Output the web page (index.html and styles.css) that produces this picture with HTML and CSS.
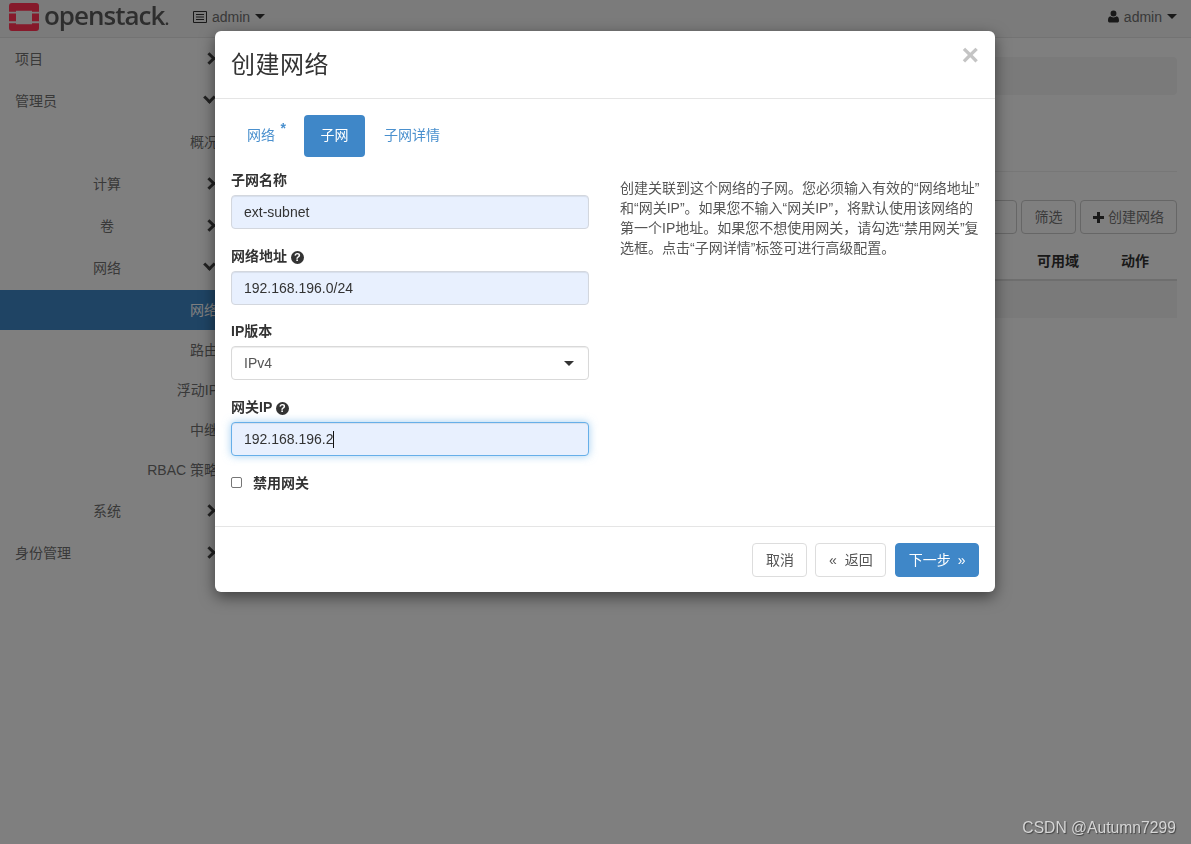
FILE: index.html
```html
<!DOCTYPE html>
<html lang="en">
<head>
    <meta charset="UTF-8">
    <meta name="viewport" content="width=device-width, initial-scale=1.0">
    <title>创建网络</title>
    <link rel="stylesheet" href="styles.css">
</head>
<body>
    <nav class="navbar">
        <div class="brand">
            <svg class="logo-mark" viewBox="0 0 30 29" width="30" height="28" preserveAspectRatio="none">
                <path fill="#861a2b" d="M3 0h24a3 3 0 0 1 3 3v6h-7V8H7v1H0V3a3 3 0 0 1 3-3zM0 11h7v8H0zM23 11h7v8h-7zM0 21h7v1h16v-1h7v5a3 3 0 0 1-3 3H3a3 3 0 0 1-3-3z"/>
            </svg>
            <span class="logo-text">openstack<span class="logo-dot">.</span></span>
        </div>
        <div class="project-menu">
            <svg class="nav-icon" viewBox="0 0 14 12" width="14" height="12">
                <path fill="#333" fill-rule="evenodd" d="M1 0h12a1 1 0 0 1 1 1v10a1 1 0 0 1-1 1H1a1 1 0 0 1-1-1V1a1 1 0 0 1 1-1zm0 1v10h12V1zm2 2h8v1H3zm0 2.500h8v1H3zM3 8h8v1H3z"/>
            </svg>
            <span>admin</span>
            <span class="caret"></span>
        </div>
        <div class="user-menu">
            <svg class="nav-icon" viewBox="0 0 12 13" width="11" height="13">
                <path fill="#333" d="M6 0a3.200 3.200 0 0 1 3.200 3.300A3.200 3.200 0 0 1 6 6.600a3.200 3.200 0 0 1-3.200-3.300A3.200 3.200 0 0 1 6 0zM2.600 6.300C3.500 7.100 4.700 7.600 6 7.600s2.500-.5 3.400-1.300c1.700.3 2.600 1.900 2.600 4.700 0 1.200-.8 2-1.900 2H1.900C.8 13 0 12.200 0 11c0-2.800.9-4.400 2.600-4.700z"/>
            </svg>
            <span>admin</span>
            <span class="caret"></span>
        </div>
    </nav>

    <div class="layout">
        <aside class="sidebar">
            <div class="side-row level-1"><span>项目</span><i class="chev chev-right"></i></div>
            <div class="side-row level-1"><span>管理员</span><i class="chev chev-down"></i></div>
            <div class="side-row sub level-3"><span>概况</span></div>
            <div class="side-row level-2 gap-top"><span>计算</span><i class="chev chev-right"></i></div>
            <div class="side-row level-2"><span>卷</span><i class="chev chev-right"></i></div>
            <div class="side-row level-2"><span>网络</span><i class="chev chev-down"></i></div>
            <div class="side-row sub level-3 active gap-top"><span>网络</span></div>
            <div class="side-row sub level-3"><span>路由</span></div>
            <div class="side-row sub level-3"><span>浮动IP</span></div>
            <div class="side-row sub level-3"><span>中继</span></div>
            <div class="side-row sub level-3"><span>RBAC 策略</span></div>
            <div class="side-row level-2"><span>系统</span><i class="chev chev-right"></i></div>
            <div class="side-row level-1"><span>身份管理</span><i class="chev chev-right"></i></div>
        </aside>

        <main class="content">
            <div class="crumb-bar"></div>
            <div class="title-rule"></div>
            <div class="actions">
                <div class="btn search-slot"></div>
                <button class="btn">筛选</button>
                <button class="btn create">
                    <svg viewBox="0 0 11 11" width="11" height="11"><path fill="#333" d="M4 0h3v4h4v3H7v4H4V7H0V4h4z"/></svg>
                    创建网络
                </button>
            </div>
            <div class="table-head">
                <span class="col-zone">可用域</span>
                <span class="col-action">动作</span>
            </div>
            <div class="table-row"></div>
        </main>
    </div>

    <div class="backdrop"></div>

    <div class="modal">
        <div class="modal-header">
            <h4 class="modal-title">创建网络</h4>
            <span class="close">×</span>
        </div>
        <div class="modal-body">
            <div class="tabs">
                <a class="tab">网络<sup class="req">*</sup></a>
                <a class="tab active">子网</a>
                <a class="tab">子网详情</a>
            </div>
            <div class="panes">
                <form class="fields">
                    <div class="field">
                        <label>子网名称</label>
                        <div class="input filled">ext-subnet</div>
                    </div>
                    <div class="field">
                        <label>网络地址 <span class="help">?</span></label>
                        <div class="input filled">192.168.196.0/24</div>
                    </div>
                    <div class="field">
                        <label>IP版本</label>
                        <div class="input select">IPv4<span class="caret"></span></div>
                    </div>
                    <div class="field">
                        <label>网关IP <span class="help">?</span></label>
                        <div class="input filled focus">192.168.196.2<span class="cursor"></span></div>
                    </div>
                    <div class="check-row">
                        <span class="checkbox"></span>
                        <label>禁用网关</label>
                    </div>
                </form>
                <p class="help-text">创建关联到这个网络的子网。您必须输入有效的“网络地址”<br>和“网关IP”。如果您不输入“网关IP”，将默认使用该网络的<br>第一个IP地址。如果您不想使用网关，请勾选“禁用网关”复<br>选框。点击“子网详情”标签可进行高级配置。</p>
            </div>
        </div>
        <div class="modal-footer">
            <button class="btn">取消</button>
            <button class="btn"><span class="angle">«</span>返回</button>
            <button class="btn primary">下一步<span class="angle after">»</span></button>
        </div>
    </div>

    <div class="watermark">CSDN @Autumn7299</div>
</body>
</html>
```

FILE: styles.css
```css
* {
    box-sizing: border-box;
}

html, body {
    height: 100%;
}

body {
    margin: 0;
    font-family: "Liberation Sans", "Noto Sans CJK SC", sans-serif;
    font-size: 14px;
    line-height: 20px;
    color: #333;
    background: #fff;
    overflow: hidden;
}

/* top bar */
.navbar {
    display: flex;
    align-items: center;
    height: 38px;
    padding-right: 14px;
    background: #f6f6f6;
    border-bottom: 1px solid #e7e7e7;
    color: #727272;
}

.brand {
    display: flex;
    align-items: center;
    width: 193px;
    padding-left: 9px;
    position: relative;
    z-index: 3;
}

.logo-mark {
    flex: none;
    margin-top: -3px;
}

.logo-text {
    margin: -5px 0 0 5px;
    font-family: "Open Sans", sans-serif;
    font-size: 26px;
    font-weight: 600;
    letter-spacing: -1px;
    line-height: 30px;
    color: #2e2e2e;
}

.logo-dot {
    font-size: 18px;
}

.project-menu, .user-menu {
    display: flex;
    align-items: center;
    margin-top: -4px;
}

.user-menu {
    margin-left: auto;
}

.nav-icon {
    margin-right: 5px;
}

.caret {
    display: inline-block;
    width: 0;
    height: 0;
    margin-left: 5px;
    border-top: 5px solid #333;
    border-left: 5px solid transparent;
    border-right: 5px solid transparent;
}

/* page under the dialog */
.layout {
    display: flex;
}

.sidebar {
    flex: none;
    width: 218px;
    color: #727272;
}

.side-row {
    position: relative;
    height: 42px;
    line-height: 42px;
    white-space: nowrap;
}

.side-row.sub {
    height: 40px;
    line-height: 40px;
}

.side-row.gap-top {
    margin-top: 1px;
}

.level-1 {
    padding-left: 15px;
}

.level-2 {
    padding-right: 4px;
    text-align: center;
}

.level-3 {
    text-align: right;
}

.side-row.active {
    background: #3e88c8;
    color: #fff;
}

.chev {
    position: absolute;
    right: 4px;
    top: 16px;
    width: 9px;
    height: 9px;
    border-top: 3px solid #444;
    border-right: 3px solid #444;
}

.chev-right {
    transform: rotate(45deg);
}

.chev-down {
    top: 13px;
    right: 4px;
    transform: rotate(135deg);
}

.content {
    flex: 1;
    padding: 19px 14px 0 15px;
}

.crumb-bar {
    height: 38px;
    background: #f5f5f5;
    border-radius: 4px;
}

.title-rule {
    height: 1px;
    margin-top: 76px;
    background: #eee;
}

.actions {
    display: flex;
    justify-content: flex-end;
    gap: 4px;
    margin-top: 28px;
}

.table-head {
    display: flex;
    justify-content: flex-end;
    height: 47px;
    padding-top: 17px;
    border-bottom: 2px solid #ddd;
    font-weight: bold;
}

.col-zone {
    margin-right: 42px;
}

.col-action {
    margin-right: 28px;
}

.table-row {
    height: 37px;
    background: #f5f5f5;
}

.btn {
    height: 34px;
    padding: 6px 12.5px;
    border: 1px solid #ccc;
    border-radius: 4px;
    background: #fff;
    color: #777;
    font: inherit;
}

.search-slot {
    width: 200px;
}

.create {
    padding: 6px 12px;
}

.create svg {
    vertical-align: -1px;
}

.backdrop {
    position: fixed;
    inset: 0;
    z-index: 1;
    background: rgba(0, 0, 0, 0.5);
}

/* dialog */
.modal {
    position: absolute;
    top: 31px;
    left: 215px;
    z-index: 2;
    width: 780px;
    height: 561px;
    display: flex;
    flex-direction: column;
    background: #fff;
    border-radius: 6px;
    box-shadow: 0 5px 15px rgba(0, 0, 0, 0.5);
}

.modal-header {
    position: relative;
    height: 68px;
    padding: 16px;
    border-bottom: 1px solid #e5e5e5;
}

.modal-title {
    margin: 0;
    font-size: 24px;
    font-weight: normal;
    line-height: 36px;
    letter-spacing: 0.5px;
}

.close {
    position: absolute;
    top: 9px;
    right: 16px;
    font-size: 30px;
    font-weight: bold;
    line-height: 30px;
    color: #c4c4c4;
}

.modal-body {
    flex: 1;
    padding: 16px 16px 0;
}

.tabs {
    display: flex;
    gap: 2px;
}

.tab {
    height: 42px;
    padding: 10px 16px;
    border-radius: 4px;
    color: #4a90ce;
    white-space: nowrap;
}

.tab.active {
    width: 61px;
    margin-right: 1px;
    background: #3f87c8;
    color: #fff;
    text-align: center;
}

.req {
    display: inline-block;
    width: 11px;
    font-size: 14px;
    font-weight: bold;
    line-height: 0;
    text-align: right;
    vertical-align: 7px;
}

.panes {
    display: flex;
    gap: 31px;
}

.fields {
    flex: none;
    width: 358px;
    padding-top: 13px;
}

.field {
    margin-bottom: 16.7px;
}

.field label, .check-row label {
    display: block;
    font-weight: bold;
    height: 20px;
    margin-bottom: 5px;
}

.help {
    display: inline-block;
    width: 13px;
    height: 13px;
    border-radius: 50%;
    background: #333;
    color: #fff;
    font-size: 11px;
    line-height: 13px;
    text-align: center;
    vertical-align: 0;
}

.input {
    display: flex;
    align-items: center;
    height: 34px;
    padding: 0 12px;
    border: 1px solid #d9d9d9;
    border-radius: 4px;
    box-shadow: inset 0 1px 1px rgba(0, 0, 0, 0.075);
    color: #555;
}

.input.filled {
    background: #e8f0fe;
    border-color: #d3d7de;
    color: #333;
}

.input.select .caret {
    margin-left: auto;
    margin-right: 2px;
}

.input.focus {
    border-color: #66afe9;
    box-shadow: inset 0 1px 1px rgba(0, 0, 0, 0.075), 0 0 8px rgba(102, 175, 233, 0.6);
}

.cursor {
    width: 1px;
    height: 17px;
    margin-left: -1px;
    background: #111;
}

.check-row {
    display: flex;
    align-items: center;
    gap: 11px;
    margin-top: 5px;
}

.check-row label {
    margin: 0;
}

.checkbox {
    width: 11px;
    height: 11px;
    border: 1px solid #767676;
    border-radius: 2px;
    background: #fff;
}

.help-text {
    flex: 1;
    margin: 21px 0 0;
    color: #555;
    white-space: nowrap;
}

.modal-footer {
    display: flex;
    justify-content: flex-end;
    gap: 8px;
    height: 66px;
    padding: 16px;
    border-top: 1px solid #e5e5e5;
}

.modal-footer .btn {
    border-color: #ddd;
    color: #555;
}

.modal-footer .btn.primary {
    margin-left: 1px;
    background: #3f87c8;
    border-color: #3f87c8;
    color: #fff;
}

.angle {
    margin-right: 8px;
}

.angle.after {
    margin: 0 0 0 7px;
}

.watermark {
    position: absolute;
    right: 15px;
    bottom: 6px;
    z-index: 3;
    font-size: 15.7px;
    color: #d5d5d5;
    text-shadow: 1px 1px 1px #444;
}
```
